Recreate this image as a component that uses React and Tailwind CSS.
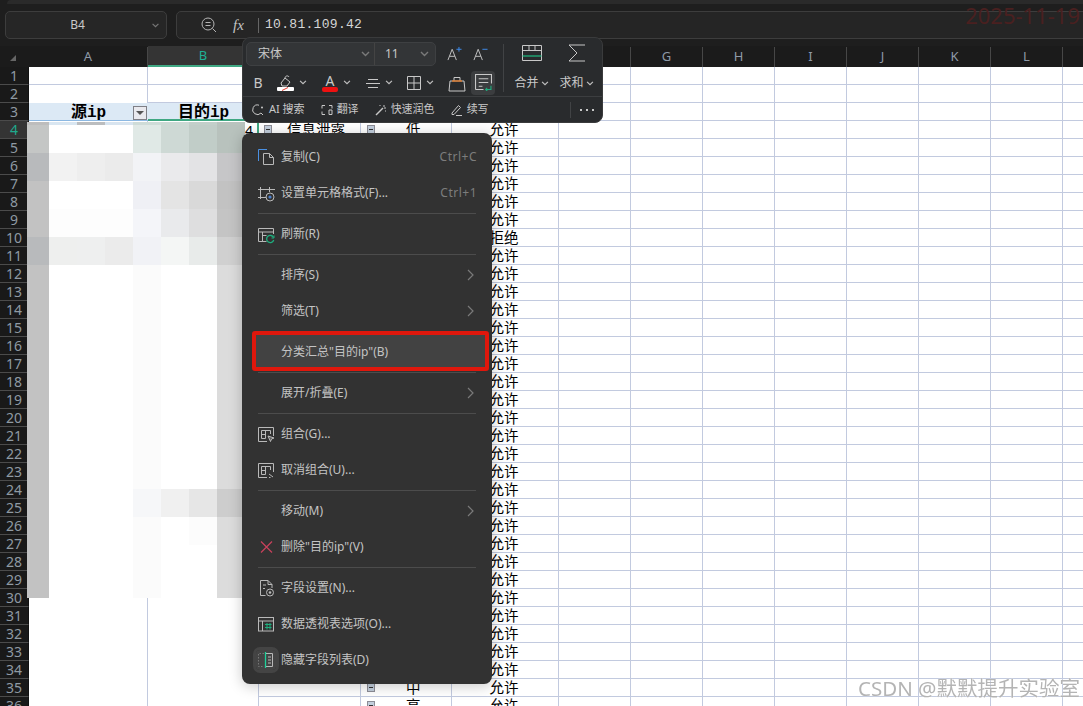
const FONT = { fontFamily: '"Noto Sans","Noto Sans CJK SC",sans-serif' };

const COLS = ['A','B','C','D','E','F','G','H','I','J','K','L','M'];
const WIDTHS = ['w-[119px]','w-[111px]','w-[102px]','w-[91px]','w-[107px]','w-[72px]','w-[72px]','w-[72px]','w-[72px]','w-[72px]','w-[72px]','w-[72px]','w-[72px]'];
const ROWS = Array.from({ length: 36 }, (_, i) => i + 1);

const MOSAIC = [
  [3, ['#bdbdbd','#d9e6f1','#bbbdbf','#d8e4ef','#cfdcd8','#cdd9d5','#c3cfca','#b9c3be']],
  [28, ['#c4c6c5','#ffffff','#ffffff','#ffffff','#e0e9e6','#ced9d5','#c1cdc8','#b8c2bd']],
  [28, ['#b8babc','#f2f2f2','#eeeeee','#ebebeb','#f2f3f6','#eaeaec','#e3e3e5','#c6c6c8']],
  [28, ['#c2c2c2','#ffffff','#ffffff','#ffffff','#eff0f5','#e4e4e4','#d9d9d9','#c2c2c2']],
  [28, ['#c2c2c2','#fdfdfd','#fdfdfd','#fdfdfd','#f4f5f9','#e9eaec','#dededf','#c4c4c4']],
  [28, ['#b8babc','#eeefee','#eeefef','#ebebeb','#f1f2f6','#f4f6f5','#e8ebea','#d0d0d0']],
  [224, ['#c2c2c2','#ffffff','#ffffff','#ffffff','#fbfbfb','#ffffff','#ffffff','#dcdcdc']],
  [28, ['#c2c2c2','#ffffff','#ffffff','#ffffff','#f6f7f9','#f0f0f0','#e6e6e6','#cdcdcd']],
  [28, ['#c2c2c2','#ffffff','#ffffff','#ffffff','#fbfbfb','#ffffff','#fcfcfc','#dcdcdc']],
  [53, ['#c2c2c2','#ffffff','#ffffff','#ffffff','#fbfbfb','#ffffff','#ffffff','#dcdcdc']],
];
const MOSAIC_W = [22, 28, 28, 28, 28, 28, 28, 28];

function Chevron({ className = 'w-[9px] h-[6px]', color = '#c0c0c0' }) {
  return (
    <svg viewBox="0 0 9 6" className={`${className} shrink-0`} fill="none" stroke={color} strokeWidth="1.400">
      <path d="M1 1l3.500 3.500L8 1" />
    </svg>
  );
}

function Collapse() {
  return (
    <span className="w-[8px] h-[9px] bg-[#c3cfdd] border border-[#8d8d96] flex items-center justify-center shrink-0">
      <span className="w-[4px] h-px bg-[#333]" />
    </span>
  );
}

const S = { fill: 'none', stroke: '#b9b9b9', strokeWidth: 1 };

const Icons = {
  copy: (
    <svg viewBox="0 0 20 20" className="w-5 h-5" {...S}>
      <path d="M2.500 14V2.500H11" stroke="#4a90e2" />
      <path d="M7.500 6.500h6l4 4v7h-10z" />
      <path d="M13.500 6.500v4h4" />
    </svg>
  ),
  format: (
    <svg viewBox="0 0 20 20" className="w-5 h-5" {...S}>
      <path d="M4.500 4v12M2 6.500h17M2 14.500h8M13.500 4v5" />
      <circle cx="14" cy="14" r="4" />
      <circle cx="14" cy="14" r="1.600" fill="#4a80d0" stroke="none" />
    </svg>
  ),
  refresh: (
    <svg viewBox="0 0 20 20" className="w-5 h-5" {...S}>
      <path d="M10.500 17.500h-8v-13h15V10M2.500 8H17.500M6.500 8v9.500M6.500 11.500h4" />
      <path d="M17.500 13.500a3.600 3.600 0 1 0 .2 2.500" stroke="#1fae7e" strokeWidth="1.300" />
      <path d="M18 11.500v2.500h-2.500" stroke="#1fae7e" />
    </svg>
  ),
  group: (
    <svg viewBox="0 0 20 20" className="w-5 h-5" {...S}>
      <path d="M11 17.500H2.500v-14h15V12" />
      <path d="M9.500 14.500H5.500v-8h9V10M5.500 10.500h4M9.500 6.500v8" />
      <path d="M12 12l6 2-2.500 1-1 2.500z" fill="#5a5a5a" />
    </svg>
  ),
  ungroup: (
    <svg viewBox="0 0 20 20" className="w-5 h-5" {...S}>
      <path d="M11 17.500H2.500v-14h15V12" />
      <path d="M9.500 14.500H5.500v-8h9V10M5.500 10.500h4M9.500 6.500v8" />
      <path d="M13 14l4 3M13 17.500h1.500" />
    </svg>
  ),
  del: (
    <svg viewBox="0 0 20 20" className="w-5 h-5" fill="none" stroke="#c9415c" strokeWidth="1.200">
      <path d="M5 4.500l11 11M16 4.500l-11 11" />
    </svg>
  ),
  field: (
    <svg viewBox="0 0 20 20" className="w-5 h-5" {...S}>
      <path d="M9.500 17.500H4.500v-15h7.500l4 4V10" />
      <path d="M12 2.500v4h4M7 7h3M7 10.500h2" />
      <circle cx="14" cy="14.500" r="3.500" />
      <circle cx="14" cy="14.500" r="1.300" fill="#b9b9b9" stroke="none" />
    </svg>
  ),
  options: (
    <svg viewBox="0 0 20 20" className="w-5 h-5" {...S}>
      <rect x="2.500" y="3.500" width="15" height="13.500" />
      <path d="M2.500 7H17.500M6.500 7v10" />
      <path d="M9 10.500h6.500M9 13.500h6.500M11 9v6.500M14 9v6.500" stroke="#1fae7e" />
    </svg>
  ),
  hide: (
    <svg viewBox="0 0 20 20" className="w-5 h-5" {...S}>
      <path d="M8 3.500H2.500v13H8" strokeDasharray="1.500 1.500" stroke="#777" />
      <path d="M9.500 3.500h7v13h-7" />
      <path d="M12 7h3M12 10h3M12 13h3" />
      <path d="M9.500 2v16" stroke="#1fd09a" strokeWidth="1.300" />
    </svg>
  ),
};

function Item({ icon, label, shortcut, arrow, hot, iconBg }) {
  return (
    <div className={`h-9 flex items-center ${hot ? 'bg-[#424242] ml-[12px] mr-[6px] pl-[2px] pr-[3px]' : 'pl-[14px] pr-[15px]'}`}>
      <span className={`w-5 h-5 flex items-center justify-center shrink-0 ${iconBg ? 'bg-[#444444] rounded-[4px] outline-[3px] outline outline-[#444444]' : ''}`}>
        {icon}
      </span>
      <span className="ml-[5px] text-[12px] text-[#c4c4c4] flex-1 whitespace-nowrap">{label}</span>
      {shortcut && <span className="text-[12px] text-[#7d7d7d] tracking-[0.500px]">{shortcut}</span>}
      {arrow && (
        <svg viewBox="0 0 7 12" className="w-[7px] h-3 mr-[3px]" fill="none" stroke="#7a7a7a" strokeWidth="1.200">
          <path d="M1 1l5 5-5 5" />
        </svg>
      )}
    </div>
  );
}

function Sep() {
  return (
    <div className="h-[5px] flex items-center px-[16px]">
      <div className="h-px w-full bg-[#4c4c4c]" />
    </div>
  );
}

function ContextMenu() {
  return (
    <div className="absolute left-[242px] top-[133px] w-[250px] h-[551px] bg-[#323232] rounded-[8px] py-[6px] shadow-[0_2px_14px_rgba(0,0,0,0.22)]">
      <Item icon={Icons.copy} label="复制(C)" shortcut="Ctrl+C" />
      <Item icon={Icons.format} label="设置单元格格式(F)..." shortcut="Ctrl+1" />
      <Sep />
      <Item icon={Icons.refresh} label="刷新(R)" />
      <Sep />
      <Item label="排序(S)" arrow />
      <Item label="筛选(T)" arrow />
      <Sep />
      <Item label={'分类汇总"目的ip"(B)'} hot />
      <Sep />
      <Item label="展开/折叠(E)" arrow />
      <Sep />
      <Item icon={Icons.group} label="组合(G)..." />
      <Item icon={Icons.ungroup} label="取消组合(U)..." />
      <Sep />
      <Item label="移动(M)" arrow />
      <Item icon={Icons.del} label={'删除"目的ip"(V)'} />
      <Sep />
      <Item icon={Icons.field} label="字段设置(N)..." />
      <Item icon={Icons.options} label="数据透视表选项(O)..." />
      <Item icon={Icons.hide} label="隐藏字段列表(D)" iconBg />
      <div className="absolute left-[10px] top-[198px] w-[237px] h-[40px] border-[4px] border-[#df170c] rounded-[3px]" />
    </div>
  );
}

function Toolbar() {
  return (
    <div className="absolute left-[242px] top-[37px] w-[361px] h-[86px] bg-[#292b2d] border border-[#3a3b3c] rounded-[8px] text-[#c8c8c8] flex flex-col">
      <div className="h-[58px] flex">
        <div className="w-[260px] shrink-0 flex flex-col">
          <div className="h-[31px] flex items-start pt-[4px] pl-[3px]">
            <div className="w-[190px] h-[24px] bg-[#333537] border border-[#3e4042] rounded-[5px] flex items-center text-[12px]">
              <span className="w-[127px] pl-[11px] flex items-center justify-between pr-[4px]">
                <span>宋体</span>
                <Chevron color="#7a7a7a" />
              </span>
              <span className="w-px h-full bg-[#444]" />
              <span className="flex-1 pl-[10px] pr-[6px] flex items-center justify-between">
                <span>11</span>
                <Chevron color="#7a7a7a" />
              </span>
            </div>
            <svg viewBox="0 0 16 16" className="w-[15px] h-[15px] ml-[11px] mt-[4px]" fill="none" stroke="#c8c8c8">
              <path d="M1 15L5.500 3.500 10 15M2.800 11h5.500" />
              <path d="M10 3.500h5.500M12.750 1v5" stroke="#3f8ef0" />
            </svg>
            <svg viewBox="0 0 16 16" className="w-[15px] h-[15px] ml-[11px] mt-[4px]" fill="none" stroke="#c8c8c8">
              <path d="M1 15L5.500 3.500 10 15M2.800 11h5.500" />
              <path d="M10 3.500h5.500" stroke="#3f8ef0" />
            </svg>
          </div>
          <div className="flex-1 flex items-center pl-[8px] text-[14px]">
            <span className="w-[14px] text-center leading-none">B</span>
            <svg viewBox="0 0 20 18" className="w-5 h-[18px] ml-[11px]" fill="none" stroke="#c8c8c8">
              <path d="M5 9l4-5 5 4-3 4H6z" />
              <path d="M9 4c0-2 3-3 4-1" />
              <rect x="1" y="13" width="17" height="4" rx="1" fill="#fff" stroke="none" />
              <path d="M6 16.500l6-3" stroke="#e53a2f" />
            </svg>
            <Chevron className="w-[8px] h-[5px] ml-[3px]" />
            <span className="ml-[15px] flex flex-col items-center w-[16px] leading-none text-[14px]">
              <span className="h-[13px]">A</span>
              <span className="w-[16px] h-[5px] bg-[#ee1111] rounded-[2px]" />
            </span>
            <Chevron className="w-[8px] h-[5px] ml-[5px]" />
            <svg viewBox="0 0 14 14" className="w-[14px] h-[14px] ml-[15px]" fill="none" stroke="#c8c8c8">
              <path d="M2 3.500h10M0 7.500h14M2 11.500h10" />
            </svg>
            <Chevron className="w-[8px] h-[5px] ml-[5px]" />
            <svg viewBox="0 0 14 14" className="w-[14px] h-[14px] ml-[14px]" fill="none" stroke="#c8c8c8">
              <path d="M.5.500h13v13H.5zM7 .500v13M.5 7h13" />
            </svg>
            <Chevron className="w-[8px] h-[5px] ml-[5px]" />
            <svg viewBox="0 0 18 18" className="w-[18px] h-[18px] ml-[14px]" fill="none" stroke="#c8c8c8">
              <path d="M2 7h14l1 10H1zM6 7V3.500h6V7" />
              <path d="M4 7h10" stroke="#e2751f" strokeWidth="1.300" />
            </svg>
            <span className="ml-[5px] w-[24px] h-[24px] bg-[#3b3d3f] rounded-[4px] flex items-center justify-center">
              <svg viewBox="0 0 16 16" className="w-[17px] h-[17px]" fill="none" stroke="#c8c8c8">
                <path d="M.5 14.500v-14h15V9" />
                <path d="M.5 14.500H8M3.500 4.500h9M3.500 8h9M3.500 11.500H7" />
                <path d="M15 11v3.500h-5M11.500 13l-1.500 1.500 1.500 1.500" stroke="#1fae7e" />
              </svg>
            </span>
          </div>
        </div>
        <div className="w-px h-[48px] mt-[6px] bg-[#414345] shrink-0" />
        <div className="flex-1 flex pl-[5px] pt-[7px]">
          <div className="w-[45px] flex flex-col items-center">
            <svg viewBox="0 0 20 16" className="w-5 h-4" fill="none" stroke="#c8c8c8">
              <path d="M.5.500h19v15H.5zM.5 5.500h19M7 .500v5M13 .500v5" />
              <path d="M.5 11h19" stroke="#20b27c" strokeWidth="1.300" />
            </svg>
            <span className="text-[12px] mt-[13px] flex items-center gap-[2px] leading-[18px] whitespace-nowrap">合并<Chevron className="w-[8px] h-[5px]" /></span>
          </div>
          <div className="w-[45px] flex flex-col items-center">
            <svg viewBox="0 0 18 18" className="w-[18px] h-[18px] -mt-[1px]" fill="none" stroke="#c8c8c8">
              <path d="M17 1H1l8 8-8 8h16" />
            </svg>
            <span className="text-[12px] mt-[12px] flex items-center gap-[2px] leading-[18px] whitespace-nowrap">求和<Chevron className="w-[8px] h-[5px]" /></span>
          </div>
        </div>
      </div>
      <div className="h-px bg-[#3c3e40]" />
      <div className="flex-1 flex items-center text-[11px] pl-[9px] whitespace-nowrap">
        <svg viewBox="0 0 12 12" className="w-3 h-3" fill="none" stroke="#c8c8c8">
          <path d="M7 1.200A4.800 4.800 0 1 0 9 9l2 2" />
          <circle cx="10" cy="3.500" r="1" fill="#c8c8c8" stroke="none" />
        </svg>
        <span className="ml-[5px]">AI 搜索</span>
        <svg viewBox="0 0 12 12" className="w-3 h-3 ml-[16px]" fill="none" stroke="#c8c8c8">
          <path d="M1 4.500v-3h3M8 1.500h3v3M1 7.500v3h3" />
          <path d="M8 6h3v4.500H8z" />
        </svg>
        <span className="ml-[4px]">翻译</span>
        <svg viewBox="0 0 12 12" className="w-3 h-3 ml-[16px]" fill="none" stroke="#c8c8c8">
          <path d="M1 11l7-7" strokeWidth="1.500" />
          <path d="M9 1v2M11 4H9M5 1v1M11 7h-1" />
        </svg>
        <span className="ml-[4px]">快速润色</span>
        <svg viewBox="0 0 12 12" className="w-3 h-3 ml-[16px]" fill="none" stroke="#c8c8c8">
          <path d="M1 9l6.500-7.500 2 2L3 10.500H1zM5 11.500h6" />
        </svg>
        <span className="ml-[4px]">续写</span>
        <div className="ml-[81px] w-px h-[16px] bg-[#414345]" />
        <div className="ml-[9px] flex gap-[3px]">
          <span className="w-[2px] h-[2px] bg-[#c8c8c8]" />
          <span className="w-[2px] h-[2px] bg-[#c8c8c8] ml-[1px]" />
          <span className="w-[2px] h-[2px] bg-[#c8c8c8] ml-[1px]" />
        </div>
      </div>
    </div>
  );
}

function Cell({ w, className = '', children }) {
  return <div className={`${w} h-full shrink-0 relative flex items-center ${className}`}>{children}</div>;
}

function Row({ n }) {
  const line = 'border-b border-r border-[#c2cadf]';
  const open = 'border-r border-[#c2cadf]';
  const current = n === 4;
  return (
    <div className="h-[18px] flex shrink-0 bg-white">
      <div className={`w-[29px] shrink-0 h-full border-b border-[#4b4b4b] border-r border-r-[#111] flex items-center justify-center text-[14px] ${current ? 'bg-[#343434] text-[#1fa98c]' : 'bg-[#191919] text-[#8f9aa3]'}`}>
        {n}
      </div>
      {n < 3 && (
        <>
          <Cell w="w-[119px]" className={n === 1 ? line : open} />
          <Cell w="w-[111px]" className={line} />
        </>
      )}
      {n === 3 && (
        <>
          <Cell w="w-[119px]" className="bg-[#dce9f5] border-b border-[#8cb8e2] justify-center font-bold text-[16px] text-black pt-[3px]">
            <span style={{ fontFamily: '"Liberation Mono","Noto Sans CJK SC",monospace' }}>源ip</span>
            <span className="absolute right-[1px] top-[3px] w-[14px] h-[14px] bg-[#e9e9ee] border border-[#7f7f86] flex items-center justify-center">
              <span className="w-0 h-0 border-l-[4px] border-r-[4px] border-t-[4px] border-l-transparent border-r-transparent border-t-[#555]" />
            </span>
          </Cell>
          <Cell w="w-[111px]" className="bg-[#dce9f5] border-b-2 border-[#3fa883] justify-center font-bold text-[16px] text-black pt-[3px]">
            <span style={{ fontFamily: '"Liberation Mono","Noto Sans CJK SC",monospace' }}>目的ip</span>
          </Cell>
        </>
      )}
      {n > 3 && (
        <>
          <Cell w="w-[119px]" className={open} />
          <Cell w="w-[111px]" className={n === 4 ? 'border-r-2 border-[#3fa883] justify-end pr-[4px] text-[14px] text-black' : open}>
            {n === 4 ? '4' : null}
          </Cell>
        </>
      )}
      <Cell w="w-[102px]" className={`${line} text-[14.500px] text-black`}>
        {n === 4 && (
          <>
            <span className="ml-[5px]"><Collapse /></span>
            <span className="ml-[15px] whitespace-nowrap">信息泄露</span>
          </>
        )}
      </Cell>
      <Cell w="w-[91px]" className={`${line} text-[14.500px] text-black`}>
        {(n === 4 || n >= 35) && (
          <>
            <span className="ml-[6px]"><Collapse /></span>
            <span className="ml-[31px]">{n === 4 ? '低' : n === 35 ? '中' : '高'}</span>
          </>
        )}
      </Cell>
      <Cell w="w-[107px]" className={`${line} justify-center text-[14.500px] text-black pr-[2px]`}>
        {n >= 4 ? (n === 10 ? '拒绝' : '允许') : null}
      </Cell>
      {WIDTHS.slice(5).map((w, i) => (
        <Cell key={i} w={w} className={line} />
      ))}
    </div>
  );
}

export default function App() {
  return (
    <div className="relative w-[1083px] h-[706px] overflow-hidden bg-[#1e1e1e] flex flex-col" style={FONT}>
      <div className="h-[4px] shrink-0 ml-[7px] bg-[#2a2a2a] rounded-tl-[4px]" />
      <div className="h-[7px] shrink-0" />
      <div className="h-[28px] shrink-0 flex pl-[5px] gap-[9px]">
        <div className="w-[162px] bg-[#262626] border border-[#3d3d3d] rounded-[5px] flex items-center text-[12px] text-[#c9c9c9] pr-[6px]">
          <span className="flex-1 text-center pr-[8px] pl-[6px]">B4</span>
          <Chevron color="#777" className="w-[9px] h-[5px]" />
        </div>
        <div className="flex-1 -mr-[10px] bg-[#252525] border border-[#3d3d3d] rounded-l-[5px] flex items-center pl-[24px]">
          <svg viewBox="0 0 16 16" className="w-4 h-4" fill="none" stroke="#b5b5b5">
            <circle cx="7" cy="7" r="6" />
            <path d="M4.500 5.500h5M4.500 8.500h5M11.500 11.500l3.500 3.500" />
          </svg>
          <span className="ml-[16px] text-[15px] italic text-[#c4c4c4] w-[16px]" style={{ fontFamily: '"Liberation Serif",serif' }}>fx</span>
          <span className="ml-[9px] w-px h-[15px] bg-[#666]" />
          <span className="ml-[6px] text-[13px] tracking-[0.300px] text-[#d6d6d6]" style={{ fontFamily: '"Liberation Mono",monospace' }}>10.81.109.42</span>
        </div>
      </div>
      <div className="h-[7px] shrink-0" />
      <div className="h-[21px] shrink-0 flex bg-[#1b1b1b]">
        <div className="w-[29px] shrink-0 flex items-center justify-center">
          <span className="w-0 h-0 border-b-[6px] border-l-[6px] border-l-transparent border-b-[#666] ml-[-4px] mt-[2px]" />
        </div>
        {COLS.map((c, i) => (
          <div
            key={c}
            className={`${WIDTHS[i]} shrink-0 flex items-center justify-center text-[13px] ${c === 'B' ? 'bg-[#343434] text-[#1fb094] border-b-2 border-[#3fa883]' : 'text-[#8f9aa8]'}`}
          >
            <span className="flex-1 text-center">{c}</span>
            <span className="w-px h-[20px] bg-[#474747] self-end" />
          </div>
        ))}
      </div>
      <div className="flex-1 overflow-hidden">
        {ROWS.map((n) => <Row key={n} n={n} />)}
      </div>

      <div className="absolute left-[27px] top-[122px]">
        {MOSAIC.map(([h, colors], r) => (
          <div key={r} className="flex" style={{ height: h }}>
            {colors.map((c, i) => (
              <div key={i} style={{ width: MOSAIC_W[i], background: c }} />
            ))}
          </div>
        ))}
      </div>

      <Toolbar />
      <ContextMenu />

      <div className="absolute right-[3px] top-[1px] text-[22px] leading-[28px] text-[#4a2020]">2025-11-19</div>
      <div className="absolute right-[3px] top-[674px] text-[20.500px] leading-[28px] text-[#b4b4b4] whitespace-nowrap [text-shadow:0_0_1px_#fff] blur-[0.4px]">CSDN @默默提升实验室</div>
    </div>
  );
}
